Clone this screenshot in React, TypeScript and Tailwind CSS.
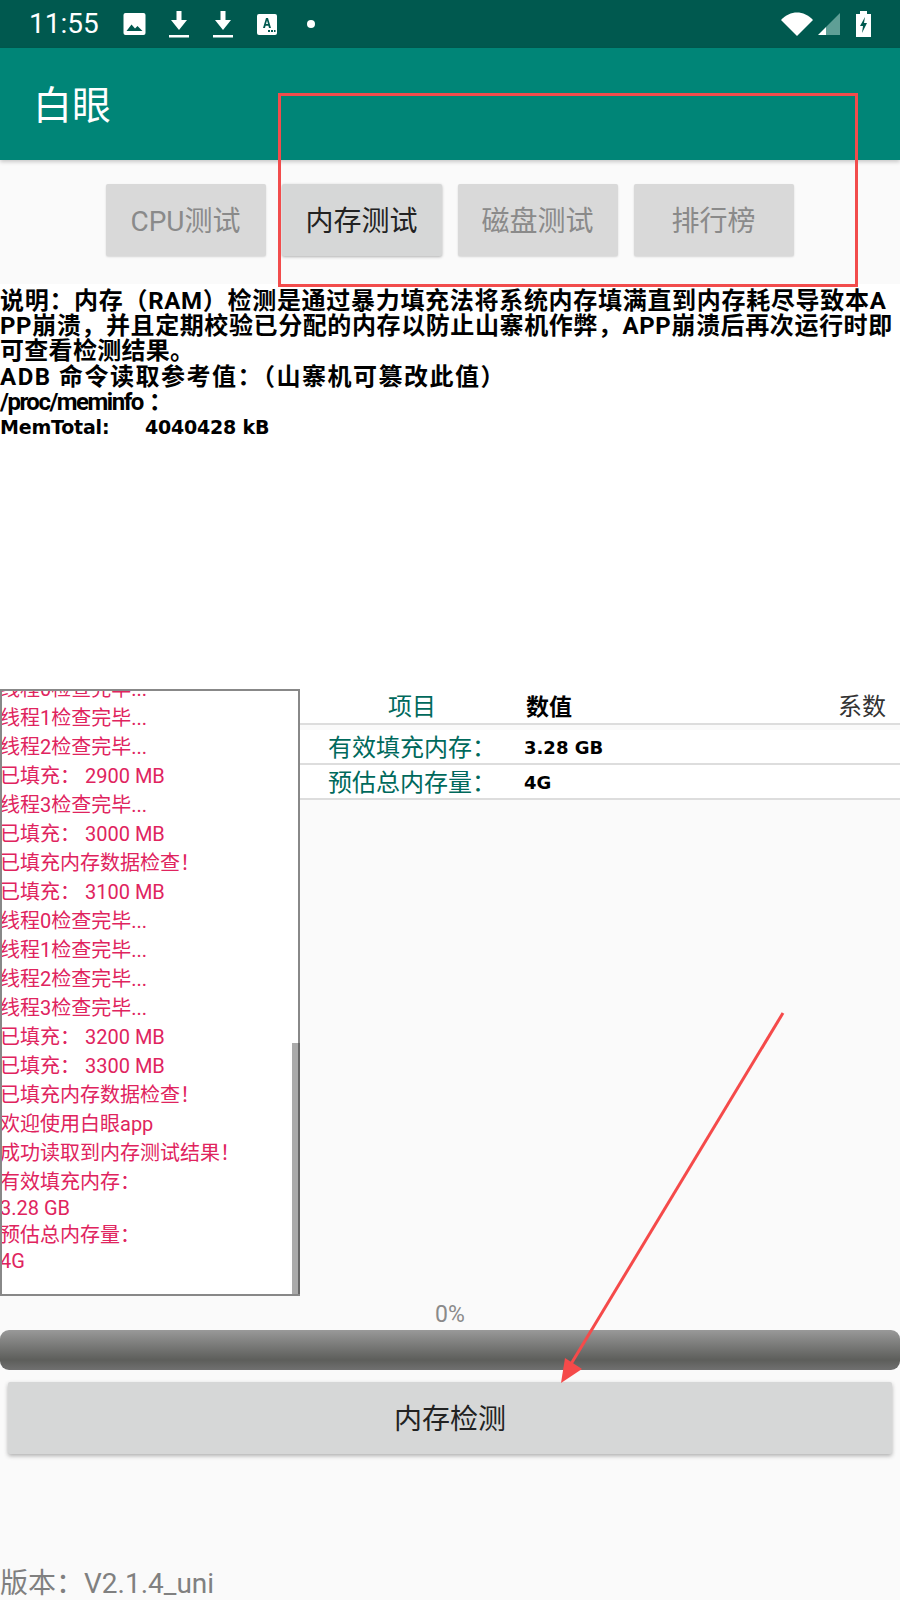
const cn = '[font-family:Roboto,"Noto_Sans_CJK_SC",sans-serif]';

const logLines = [
  "线程0检查完毕...",
  "线程1检查完毕...",
  "线程2检查完毕...",
  "已填充： 2900 MB",
  "线程3检查完毕...",
  "已填充： 3000 MB",
  "已填充内存数据检查！",
  "已填充： 3100 MB",
  "线程0检查完毕...",
  "线程1检查完毕...",
  "线程2检查完毕...",
  "线程3检查完毕...",
  "已填充： 3200 MB",
  "已填充： 3300 MB",
  "已填充内存数据检查！",
  "欢迎使用白眼app",
  "成功读取到内存测试结果！",
  "有效填充内存：",
  "3.28 GB",
  "预估总内存量：",
  "4G",
];

function StatusIcons() {
  return (
    <div className="flex items-center">
      <svg width="23" height="22" viewBox="0 0 22 22" className="ml-[24px]">
        <path d="M2 0h18a2 2 0 0 1 2 2v18a2 2 0 0 1-2 2H2a2 2 0 0 1-2-2V2a2 2 0 0 1 2-2z" fill="#fff" />
        <path d="M3 18l5-6.5 3.5 4 2.5-2.5 5 5z" fill="#00594f" />
      </svg>
      <svg width="20" height="27" viewBox="0 0 20 27" className="ml-[23px]">
        <path d="M7.5 0h5v9H18l-8 10-8-10h5.500z" fill="#fff" />
        <rect y="24" width="20" height="2.500" fill="#fff" />
      </svg>
      <svg width="20" height="27" viewBox="0 0 20 27" className="ml-[24px]">
        <path d="M7.5 0h5v9H18l-8 10-8-10h5.500z" fill="#fff" />
        <rect y="24" width="20" height="2.500" fill="#fff" />
      </svg>
      <svg width="20" height="21" viewBox="0 0 20 21" className="ml-[24px]">
        <rect width="20" height="21" rx="2" fill="#fff" />
        <path d="M6 14l3-10h2l3 10h-2l-.6-2.200H8.600L8 14zM9 10h2l-1-3.500z" fill="#00594f" />
        <rect x="11" y="16" width="2" height="2" fill="#00594f" />
        <rect x="14" y="16" width="2" height="2" fill="#00594f" />
        <rect x="17" y="16" width="1.500" height="2" fill="#00594f" />
      </svg>
      <div className="ml-[30px] h-2 w-2 rounded-full bg-white" />
    </div>
  );
}

function SystemIcons() {
  return (
    <div className="flex items-center">
      <svg width="32" height="24" viewBox="0 0 32 24">
        <path d="M0 8C9-2 23-2 32 8L16 24z" fill="#fff" />
      </svg>
      <svg width="22" height="22" viewBox="0 0 22 22" className="ml-[5px]">
        <path d="M22 0v22H8V14z" fill="#5f9f96" />
        <path d="M8 14v8H0z" fill="#fff" />
      </svg>
      <svg width="15" height="26" viewBox="0 0 15 26" className="ml-[16px]">
        <path d="M4 0h7v3h4v23H0V3h4z" fill="#fff" />
        <path d="M9 6L4 15h3l-1 7 5-10H8z" fill="#00594f" />
      </svg>
    </div>
  );
}

function Tab({ label, active }: { label: string; active?: boolean }) {
  return (
    <div
      className={
        active
          ? "flex h-[72px] w-[160px] items-center justify-center rounded-[2px] bg-[#d6d7d7] pt-[3px] text-[28px] text-[#222] shadow-[0_1px_3px_rgba(0,0,0,0.3)]"
          : "flex h-[72px] w-[160px] items-center justify-center rounded-[2px] bg-[#d9d9d9] pt-[3px] text-[28px] text-[#8a8a8a] shadow-[0_1px_2px_rgba(0,0,0,0.15)]"
      }
    >
      {label}
    </div>
  );
}

export default function App() {
  return (
    <div className={`relative flex h-[1600px] w-[900px] flex-col overflow-hidden bg-[#fafafa] ${cn}`}>
      <div className="flex h-12 shrink-0 items-center justify-between bg-[#00594f] pl-[29px] pr-[29px]">
        <div className="flex items-center">
          <span className="text-[28px] text-white">11:55</span>
          <StatusIcons />
        </div>
        <SystemIcons />
      </div>

      <div className="flex h-28 shrink-0 items-center bg-[#008577] pl-[33px] text-[39px] text-white shadow-[0_2px_4px_rgba(0,0,0,0.2)]">
        <span className="mt-[5px]">白眼</span>
      </div>

      <div className="flex h-[124px] shrink-0 items-start justify-center gap-[16px] pr-[1px] pt-[24px]">
        <Tab label="CPU测试" />
        <Tab label="内存测试" active />
        <Tab label="磁盘测试" />
        <Tab label="排行榜" />
      </div>

      <div className="h-[405px] shrink-0 bg-white pt-[5px] text-[24px] font-bold leading-[25.200px] whitespace-nowrap text-black">
        <div className="tracking-[0.700px]">说明：内存（RAM）检测是通过暴力填充法将系统内存填满直到内存耗尽导致本A</div>
        <div className="tracking-[0.600px]">PP崩溃，并且定期校验已分配的内存以防止山寨机作弊，APP崩溃后再次运行时即</div>
        <div className="tracking-[0.300px]">可查看检测结果。</div>
        <div className="tracking-[1.500px]">ADB 命令读取参考值：（山寨机可篡改此值）</div>
        <div>
          <span className="tracking-[-1.500px]">/proc/meminfo</span> ：
        </div>
        <div className="flex text-[19px] tracking-[-0.200px] [font-family:'DejaVu_Sans',sans-serif]">
          <span className="w-[145px]">MemTotal:</span>
          <span>4040428 kB</span>
        </div>
      </div>

      <div className="flex h-[607px] shrink-0">
        <div className="relative h-full w-[300px] shrink-0 overflow-hidden border-2 border-r-0 border-[#888] bg-white pr-2 text-[20px] text-[#e0245e]">
          <div className="-mt-[16px] whitespace-pre-wrap">
            {logLines.map((line, i) => (
              <div
                key={i}
                className={
                  line === "3.28 GB" || line === "4G"
                    ? "-ml-[2px] leading-[23.500px]"
                    : "-ml-[2px] leading-[29px]"
                }
              >
                {line}
              </div>
            ))}
          </div>
          <div className="absolute right-0 bottom-0 top-0 w-[2px] bg-[#888]" />
          <div className="absolute right-0 bottom-0 h-[251px] w-[8px] border-r-2 border-[#666] bg-[#aaa]" />
        </div>

        <div className="flex-1 text-[24px]">
          <div className="grid h-[36px] grid-cols-[226px_1fr_auto] items-center border-b-2 border-[#ddd] bg-white pr-[14px] pt-[2px]">
            <span className="pl-[88px] leading-none text-[#00695c]">项目</span>
            <span className="text-[23px] font-bold leading-none text-black">数值</span>
            <span className="leading-none text-[#333]">系数</span>
          </div>
          <div className="mt-[5px] grid h-[35px] grid-cols-[224px_1fr] items-center border-b-2 border-[#ddd] bg-white pt-[2px]">
            <span className="pl-[28px] leading-none text-[#00695c]">有效填充内存：</span>
            <span className="text-[18px] font-bold leading-none text-black [font-family:'DejaVu_Sans',sans-serif]">3.28 GB</span>
          </div>
          <div className="grid h-[35px] grid-cols-[224px_1fr] items-center border-b-2 border-[#ddd] bg-white pt-[2px]">
            <span className="pl-[28px] leading-none text-[#00695c]">预估总内存量：</span>
            <span className="text-[18px] font-bold leading-none text-black [font-family:'DejaVu_Sans',sans-serif]">4G</span>
          </div>
        </div>
      </div>

      <div className="flex h-[34px] shrink-0 items-center justify-center pt-[4px] text-[23px] text-[#8a8a8a]">0%</div>
      <div className="h-10 shrink-0 rounded-[9px] bg-gradient-to-b from-[#999] via-[#5d5e5b] via-75% to-[#707070]" />
      <div className="mx-2 mt-3 flex h-[72px] shrink-0 items-center justify-center rounded-[2px] bg-[#d6d7d7] pt-[3px] text-[28px] text-[#222] shadow-[0_2px_4px_rgba(0,0,0,0.3)]">
        内存检测
      </div>
      <div className="mt-auto text-[28px] leading-[33px] text-[#808080]">版本：V2.1.4_uni</div>

      {/* annotations drawn over the screenshot */}
      <div className="absolute left-[278px] top-[93px] h-[194px] w-[580px] border-[3px] border-[#f24c4c]" />
      <svg width="900" height="1600" viewBox="0 0 900 1600" className="pointer-events-none absolute left-0 top-0">
        <line x1="783" y1="1013" x2="571" y2="1364" stroke="#f54a4a" strokeWidth="3" />
        <path d="M561 1383L565 1358L582 1369z" fill="#f54a4a" />
      </svg>
    </div>
  );
}
